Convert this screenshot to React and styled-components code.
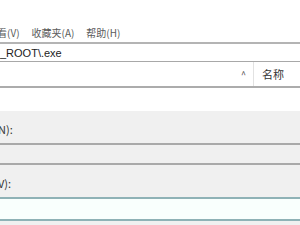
import React from 'react'
import styled, { createGlobalStyle } from 'styled-components'

const Global = createGlobalStyle`
  html, body { margin: 0; padding: 0; background: #fff; }
  body { font-family: "Noto Sans CJK SC", "Noto Sans", sans-serif; }
`;

const Window = styled.div`
  width: 300px;
  height: 225px;
  overflow: hidden;
  background: #fff;
  display: flex;
  flex-direction: column;
`;

const Blank = styled.div`
  height: ${p => p.h}px;
  flex: none;
  background: ${p => p.bg || '#fff'};
`;

const MenuBar = styled.div`
  height: 20px;
  display: flex;
  align-items: center;
  gap: 12px;
  margin-left: -13px;
  font-size: 10px;
  color: #5a5a5a;
  border-bottom: 2px solid #b4b4b4;
`;

const MenuItem = styled.span`
  white-space: nowrap;
  line-height: 20px;
  padding-top: 1px;
`;

const AddressRow = styled.div`
  height: 17px;
  display: flex;
  align-items: center;
  font-family: "Liberation Sans", Arial, sans-serif;
  font-size: 11px;
  color: #222;
  border-bottom: 1px solid #a8a8a8;
`;

const HeaderRow = styled.div`
  height: 24px;
  display: flex;
  border-bottom: 2px solid #acacac;
`;

const SortCell = styled.div`
  width: 254px;
  display: flex;
  align-items: center;
  justify-content: flex-end;
  padding-right: 7px;
  box-sizing: border-box;
  border-right: 1px solid #e2e2e2;
  font-size: 9px;
  color: #444;
`;

const HeaderCell = styled.div`
  flex: 1;
  display: flex;
  align-items: center;
  padding-left: 8px;
  font-size: 11px;
  color: #333;
`;

const Panel = styled.div`
  flex: 1;
  background: #f0f0f0;
  display: flex;
  flex-direction: column;
`;

const LabelRow = styled.div`
  height: 32px;
  box-sizing: border-box;
  padding-top: 4px;
  display: flex;
  align-items: center;
  margin-left: -2px;
  font-size: 11px;
  color: #333;
`;

const Field = styled.div`
  height: ${p => p.h}px;
  flex: none;
  box-sizing: border-box;
  background: ${p => (p.focused ? '#f9fffd' : '#f0f0f0')};
  border-top: 2px solid ${p => (p.focused ? '#8fb2b6' : '#a9a9a9')};
  border-bottom: 2px solid ${p => (p.focused ? '#8fb2b6' : '#a9a9a9')};
`;

export default function App() {
  return (
    <>
      <Global />
      <Window>
        <Blank h={22} />
        <MenuBar>
          <MenuItem>查看(V)</MenuItem>
          <MenuItem>收藏夹(A)</MenuItem>
          <MenuItem>帮助(H)</MenuItem>
        </MenuBar>
        <AddressRow>_ROOT\.exe</AddressRow>
        <HeaderRow>
          <SortCell>^</SortCell>
          <HeaderCell>名称</HeaderCell>
        </HeaderRow>
        <Blank h={23} />
        <Panel>
          <LabelRow>N):</LabelRow>
          <Field h={22} />
          <LabelRow>V):</LabelRow>
          <Field h={24} focused />
        </Panel>
      </Window>
    </>
  );
}
